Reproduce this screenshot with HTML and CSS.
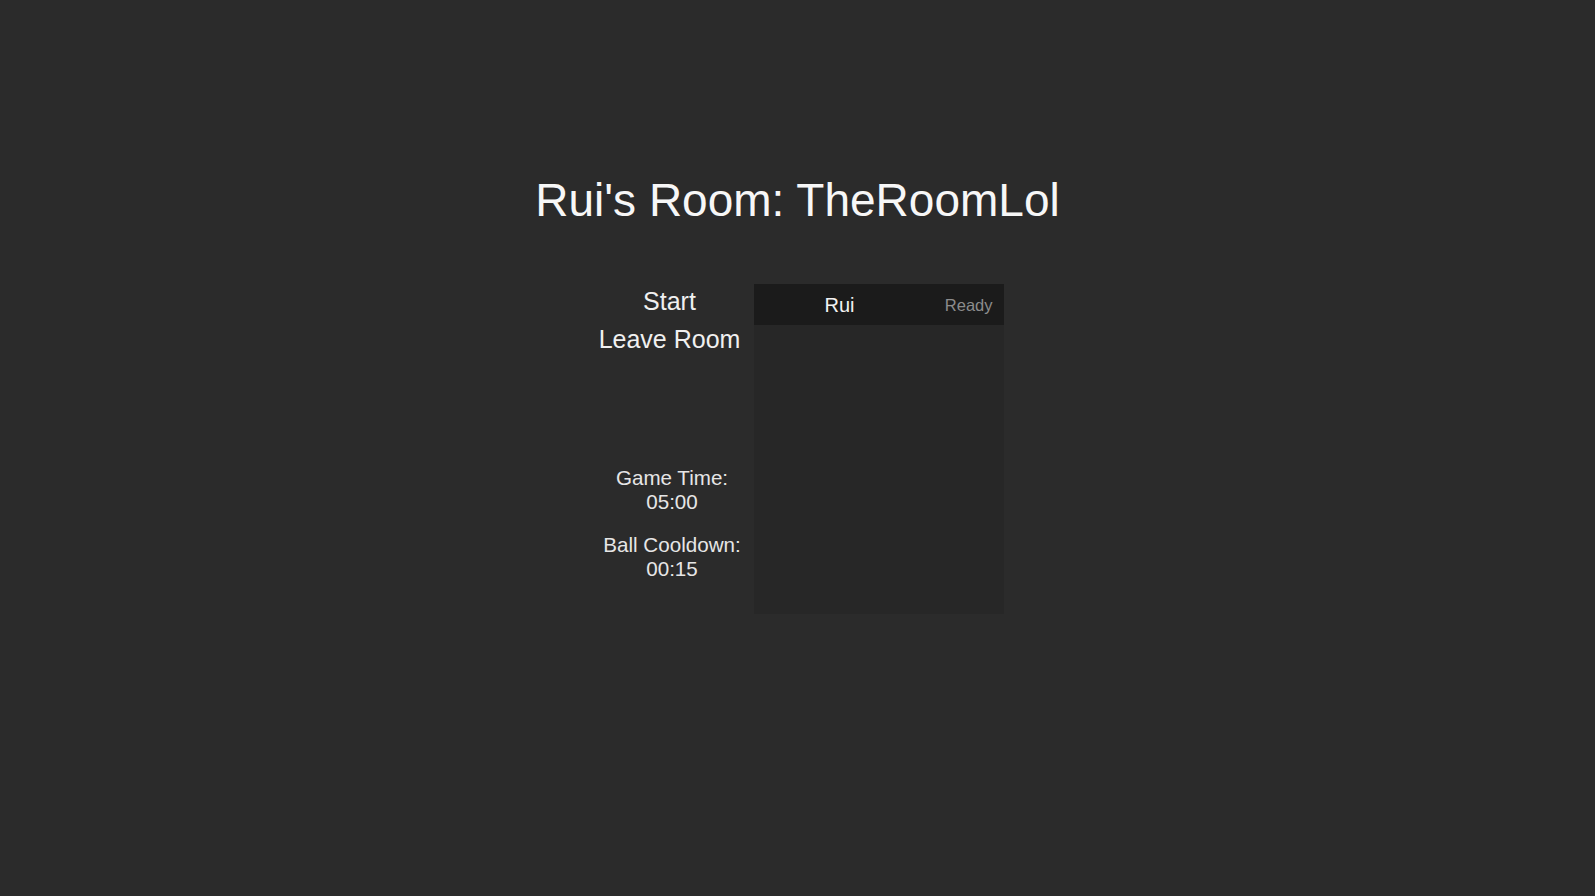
FILE: index.html
```html
<!DOCTYPE html>
<html lang="en">
<head>
<meta charset="utf-8">
<title>Rui's Room</title>
<link rel="stylesheet" href="styles.css">
</head>
<body>
<div class="page">
  <h1 class="title">Rui's Room: TheRoomLol</h1>
  <div class="room">
    <div class="side">
      <div class="actions">
        <div class="action">Start</div>
        <div class="action">Leave Room</div>
      </div>
      <div class="settings">
        <div class="setting">
          <div>Game Time:</div>
          <div>05:00</div>
        </div>
        <div class="setting">
          <div>Ball Cooldown:</div>
          <div>00:15</div>
        </div>
      </div>
    </div>
    <div class="players">
      <div class="player">
        <div class="player-name">Rui</div>
        <div class="player-status">Ready</div>
      </div>
    </div>
  </div>
</div>
</body>
</html>
```
FILE: styles.css
```css
html, body {
  margin: 0;
  padding: 0;
  background: #2b2b2b;
  color: #f2f2f2;
  font-family: "Liberation Sans", Arial, sans-serif;
}

.page {
  width: 1595px;
  height: 896px;
  display: flex;
  flex-direction: column;
  align-items: center;
}

.title {
  margin: 173px 0 0 0;
  font-size: 46px;
  font-weight: normal;
  line-height: 55px;
  color: #f7f7f7;
}

.room {
  margin-top: 55px;
  display: flex;
  gap: 3px;
  align-items: flex-start;
  margin-left: -3px;
}

.side {
  width: 162px;
  display: flex;
  flex-direction: column;
  align-items: center;
  text-align: center;
}

.actions {
  display: flex;
  flex-direction: column;
  align-items: center;
}

.action {
  font-size: 25px;
  line-height: 37.5px;
  color: #f0f0f0;
  cursor: pointer;
}

.settings {
  margin-top: 108px;
  display: flex;
  flex-direction: column;
  gap: 18.5px;
  padding-left: 5px;
}

.setting {
  font-size: 20.6px;
  line-height: 24px;
  color: #e6e6e6;
}

.players {
  margin-top: 1px;
  width: 250px;
  height: 330px;
  background: #272727;
}

.player {
  height: 41px;
  display: flex;
  align-items: center;
  background: #1b1b1b;
}

.player-name {
  width: 172px;
  text-align: center;
  font-size: 20px;
  color: #f2f2f2;
  padding-top: 1px;
}

.player-status {
  flex: 1;
  text-align: right;
  padding-right: 11px;
  font-size: 16.5px;
  color: #8c8c8c;
  padding-top: 1px;
}
```
